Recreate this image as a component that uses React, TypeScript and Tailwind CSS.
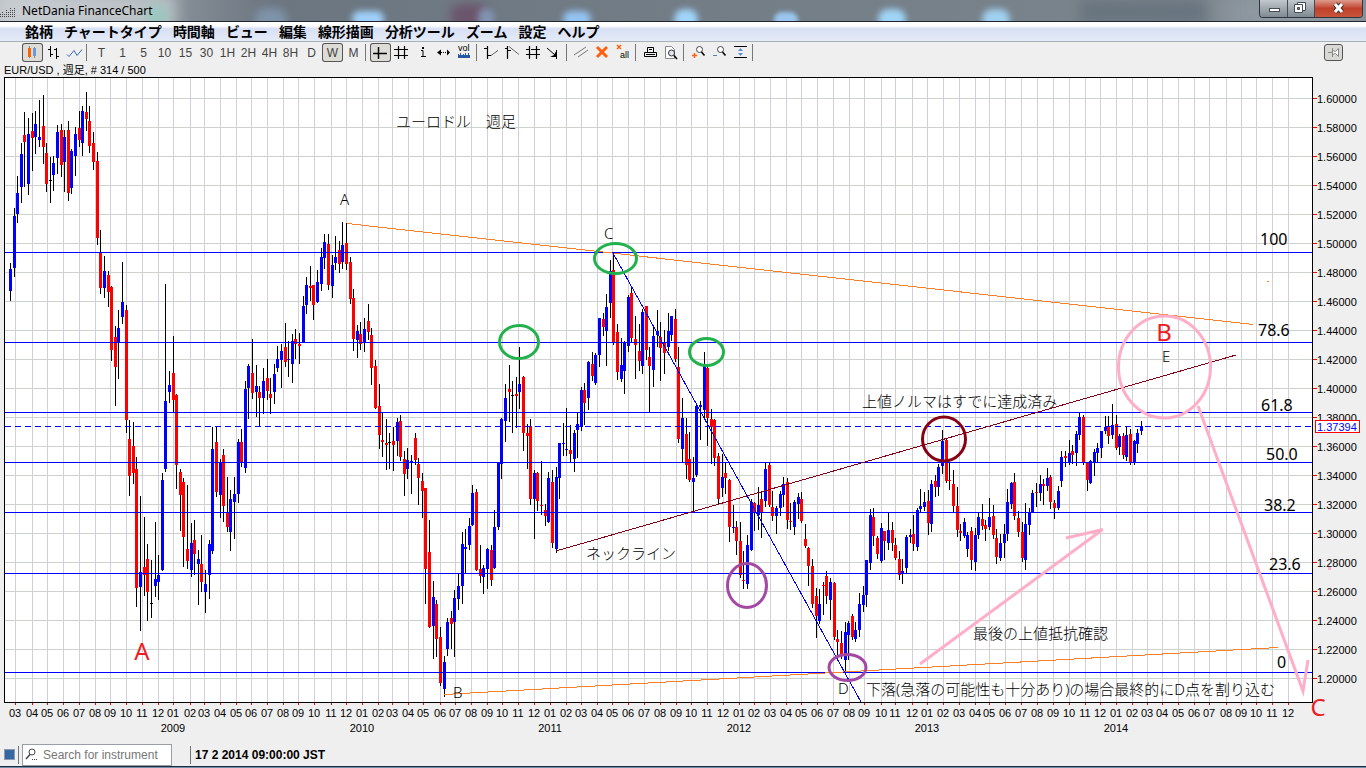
import type { ReactNode } from "react"

// x, high, low, body top, body bottom, kind (1 up, 0 down, 2 flat)
const CANDLES: number[][] = [
    [10,263,301,269,291,1],[14,208,277,216,268,1],[17,176,223,193,214,1],[21,143,203,154,187,1],[24,112,187,135,142,0],[28,118,195,134,184,1],
    [32,113,171,131,138,0],[35,111,154,124,137,1],[39,100,147,137,140,1],[43,95,164,126,147,0],[46,143,192,153,184,0],[50,157,203,180,181,2],
    [53,156,191,163,175,1],[57,125,174,132,158,1],[61,124,177,130,165,0],[64,130,192,137,162,1],[68,121,201,130,193,0],[71,149,194,151,188,1],
    [75,127,176,134,156,1],[79,111,147,128,140,0],[82,106,156,111,143,1],[86,92,131,112,119,0],[89,106,153,121,146,0],[93,132,170,143,162,0],
    [97,152,245,161,238,0],[100,230,294,253,288,0],[104,256,298,271,288,1],[108,271,307,275,292,0],[111,286,361,287,350,0],[115,326,406,337,367,0],
    [118,310,379,328,342,1],[122,262,324,302,317,1],[126,305,433,310,420,0],[129,420,496,439,476,0],[133,422,484,446,473,0],[136,457,607,469,588,0],
    [140,496,631,572,587,1],[144,517,596,567,575,0],[147,544,621,559,592,0],[151,560,618,603,604,2],[155,522,597,579,586,1],[158,555,600,575,582,1],
    [162,473,571,480,570,1],[165,284,472,401,469,1],[169,371,403,385,392,1],[173,336,412,373,400,0],[176,394,489,395,465,0],[180,469,531,472,495,0],
    [183,478,567,482,537,0],[187,485,569,549,561,0],[191,523,577,543,570,1],[194,520,575,540,554,0],[198,550,605,559,564,1],[201,535,592,564,582,0],
    [205,570,613,584,592,1],[209,540,599,544,575,1],[212,427,554,449,551,1],[216,427,497,442,492,0],[220,459,518,462,495,1],[223,449,522,455,506,0],
    [227,477,532,513,527,0],[230,490,551,499,532,1],[234,477,539,494,502,1],[238,439,503,442,494,1],[241,429,467,442,462,0],[245,381,473,389,468,1],
    [248,364,419,366,388,1],[252,339,399,373,393,0],[256,365,417,386,392,1],[259,386,426,392,398,0],[263,368,414,381,398,1],[267,359,400,378,391,0],
    [270,378,414,394,398,0],[274,364,404,374,392,1],[277,346,372,359,368,1],[281,344,388,351,360,1],[285,323,367,347,362,0],[288,341,377,359,360,1],
    [292,334,383,341,364,1],[295,329,359,339,344,0],[299,333,364,344,346,0],[303,296,342,306,342,1],[306,277,314,285,305,1],[310,266,301,286,288,0],
    [313,285,320,285,305,0],[317,270,303,282,302,1],[321,248,291,257,284,1],[324,234,269,242,258,1],[328,234,290,244,285,0],[332,255,298,265,286,1],
    [335,236,270,257,263,1],[339,241,273,250,264,0],[342,222,269,245,262,1],[346,223,270,243,264,0],[350,257,304,262,299,0],[353,289,351,298,339,0],
    [357,325,358,331,340,1],[360,322,350,334,344,0],[364,318,352,329,343,1],[368,304,340,321,332,0],[371,328,385,335,368,0],[375,360,409,366,408,0],
    [379,384,449,406,435,0],[382,413,457,440,442,0],[386,419,470,443,445,0],[389,433,469,442,443,2],[393,427,471,441,445,0],[397,418,456,422,441,1],
    [400,415,461,421,457,0],[404,451,496,459,474,0],[407,448,479,460,469,1],[411,455,494,461,462,1],[415,433,465,438,460,0],[418,458,505,464,478,0],
    [422,473,518,481,491,0],[425,488,604,488,569,0],[429,520,628,552,627,0],[433,581,659,597,626,1],[436,600,657,604,639,0],[440,627,686,637,683,0],
    [444,656,697,662,689,1],[447,618,656,622,649,1],[451,611,649,618,624,0],[454,590,657,598,622,1],[458,574,610,586,599,1],[462,532,604,544,586,1],
    [465,529,573,547,549,1],[469,518,550,526,545,1],[472,485,526,493,525,1],[476,489,571,492,570,0],[480,545,583,569,576,0],[483,565,594,568,577,1],
    [487,548,589,549,569,1],[491,545,586,550,580,0],[494,510,569,527,568,1],[498,462,530,462,527,1],[501,418,479,419,464,1],[505,384,442,398,421,1],
    [509,365,422,389,392,0],[512,381,433,395,396,2],[516,377,428,394,396,0],[519,347,409,384,392,1],[523,376,451,377,433,0],[527,424,469,433,436,0],
    [530,419,505,426,499,0],[534,470,539,473,499,1],[537,472,511,473,501,0],[541,461,515,505,506,0],[545,504,526,510,516,0],[548,472,523,478,522,1],
    [552,470,548,482,543,0],[556,467,553,477,549,1],[559,443,499,443,478,1],[563,423,456,443,444,1],[566,408,456,449,450,1],[570,425,462,450,454,0],
    [574,430,472,433,459,1],[577,413,458,424,430,1],[581,387,431,390,427,1],[584,383,425,390,403,0],[588,361,410,362,398,1],[592,352,381,364,376,0],
    [595,353,385,355,383,1],[599,318,367,318,355,1],[603,313,336,319,327,0],[606,294,366,307,331,1],[610,260,318,271,303,1],[613,253,345,270,343,0],
    [617,324,380,332,372,0],[621,338,382,365,379,1],[624,341,394,342,371,1],[628,295,352,297,346,1],[631,287,342,293,338,0],[635,316,379,339,345,0],
    [639,324,371,351,361,0],[642,309,374,312,366,1],[646,306,360,306,350,0],[649,347,412,357,366,0],[653,326,387,336,370,1],[657,310,347,331,335,1],
    [660,322,381,337,348,0],[664,330,374,343,353,0],[668,313,351,331,347,1],[671,316,341,316,335,1],[675,309,362,319,359,0],[678,347,443,367,439,0],
    [682,398,463,418,449,1],[686,418,479,434,465,0],[689,432,482,459,480,0],[693,457,513,478,482,1],[696,404,477,406,475,1],[700,401,440,405,407,1],
    [704,352,418,365,410,1],[707,365,446,368,418,0],[711,409,464,419,427,0],[714,419,466,420,458,0],[718,453,504,456,499,0],[722,454,497,477,488,1],
    [725,462,494,473,478,0],[729,479,542,480,527,0],[733,505,533,527,528,1],[736,521,555,527,541,0],[740,522,578,541,575,0],[743,551,589,580,581,0],
    [747,535,589,545,584,1],[751,499,551,502,550,1],[754,502,531,503,512,0],[758,487,530,505,515,1],[761,492,538,499,512,0],[765,463,507,469,501,1],
    [769,463,507,465,505,0],[772,491,521,507,516,0],[776,506,534,508,516,1],[780,491,516,494,508,1],[783,477,507,484,495,1],[787,478,529,482,520,0],
    [790,503,530,521,522,0],[794,500,535,502,527,1],[798,493,519,497,504,1],[801,492,523,499,521,0],[805,524,548,539,546,0],[808,547,586,548,566,0],
    [812,559,608,566,604,0],[816,588,638,596,616,0],[819,589,624,604,621,1],[823,582,615,585,586,0],[826,571,604,576,596,0],[830,578,620,582,600,1],
    [834,582,640,583,637,0],[837,630,655,639,642,0],[841,631,659,643,655,0],[845,622,672,632,660,1],[848,621,660,623,635,1],[852,614,640,616,637,0],
    [855,622,642,630,639,1],[859,593,637,604,630,1],[863,586,612,595,605,1],[866,560,607,560,595,1],[870,509,570,515,563,1],[873,508,546,517,536,0],
    [877,536,559,538,554,0],[881,523,563,528,561,1],[884,531,560,531,541,0],[888,513,550,530,543,1],[892,522,551,530,543,0],[895,538,560,545,558,0],
    [899,551,580,559,575,0],[902,559,584,571,574,1],[906,535,574,537,568,1],[910,529,543,535,537,1],[913,515,551,534,544,0],[917,508,551,510,547,1],
    [920,489,512,506,509,1],[924,492,511,502,507,1],[928,490,535,501,523,0],[931,480,532,484,524,1],[935,475,497,481,487,0],[938,464,496,467,487,1],
    [942,430,474,441,466,1],[946,438,483,440,481,0],[949,462,490,480,481,0],[953,470,512,484,506,0],[957,487,537,506,530,0],[960,524,541,531,533,0],
    [964,518,538,522,536,1],[967,532,557,535,549,1],[971,527,570,531,560,0],[975,528,571,535,562,1],[978,513,539,517,535,1],[982,504,530,519,526,0],
    [985,520,541,525,529,0],[989,498,530,517,527,1],[993,505,539,516,535,0],[996,529,564,538,557,0],[1000,534,561,543,558,1],[1004,524,558,534,543,1],
    [1007,489,541,502,534,1],[1011,482,509,483,504,1],[1014,473,520,482,516,0],[1018,511,537,518,532,0],[1022,522,562,532,558,0],[1025,503,570,524,560,1],
    [1029,508,535,512,525,1],[1032,490,513,493,512,1],[1036,483,507,492,493,0],[1040,475,501,484,493,1],[1043,479,505,484,486,0],[1047,468,491,478,486,1],
    [1050,475,509,477,502,0],[1054,500,519,503,508,0],[1058,486,510,491,508,1],[1061,451,487,457,481,1],[1065,451,467,456,458,0],[1069,440,465,453,463,1],
    [1072,445,464,451,455,0],[1076,431,466,434,453,1],[1079,413,440,417,435,1],[1083,415,465,417,463,0],[1087,463,491,463,480,0],[1090,460,484,461,483,1],
    [1094,449,476,452,463,1],[1097,443,462,448,453,1],[1101,431,458,431,448,1],[1105,416,434,427,431,1],[1108,416,444,426,436,0],[1112,404,439,425,435,1],
    [1116,415,450,424,448,0],[1119,434,455,436,447,1],[1123,433,459,436,455,0],[1126,426,461,435,457,1],[1130,429,465,434,463,0],[1134,440,465,441,463,1],
    [1137,429,453,433,444,1],[1141,421,435,426,431,1],
]

const COLORS = ["#ff0000", "#0000ff", "#000000"]

// first month is march 2008
const MONTHS = [
    15, 32, 47, 63, 79, 95, 110, 126, 142, 158,
    173, 190, 204, 220, 236, 251, 267, 283, 298, 314, 331, 346,
    362, 378, 392, 408, 423, 440, 455, 471, 487, 502, 518, 534,
    550, 566, 581, 597, 612, 628, 644, 660, 676, 691, 707, 723,
    739, 754, 770, 786, 801, 817, 833, 849, 864, 881, 895, 912,
    927, 943, 959, 975, 989, 1005, 1021, 1037, 1053, 1069, 1085, 1100,
    1116, 1132, 1147, 1162, 1178, 1194, 1209, 1226, 1241, 1256, 1272, 1288,
]

const PRICES = Array.from({ length: 21 }, (_, i) => ({
    label: (1.6 - i * 0.02).toFixed(5),
    y: 98 + i * 29,
}))

const FIBS = [
    { label: "100", x: 1260, ty: 245, y: 252 },
    { label: "78.6", x: 1258, ty: 336, y: 342 },
    { label: "61.8", x: 1261, ty: 411, y: 412 },
    { label: "50.0", x: 1266, ty: 460, y: 462 },
    { label: "38.2", x: 1264, ty: 511, y: 512 },
    { label: "23.6", x: 1269, ty: 570, y: 573 },
    { label: "0", x: 1277, ty: 668, y: 672 },
]

const NOTES = [
    { text: "ユーロドル　週足", x: 396, y: 127 },
    { text: "上値ノルマはすでに達成済み", x: 862, y: 407 },
    { text: "ネックライン", x: 586, y: 559 },
    { text: "最後の上値抵抗確認", x: 973, y: 639 },
    { text: "下落(急落の可能性も十分あり)の場合最終的にD点を割り込む", x: 866, y: 695 },
    { text: "A", x: 340, y: 205 },
    { text: "B", x: 453, y: 698 },
    { text: "C", x: 604, y: 239 },
    { text: "D", x: 838, y: 694 },
    { text: "E", x: 1162, y: 362 },
]

const MENUS = ["銘柄", "チャートタイプ", "時間軸", "ビュー", "編集", "線形描画", "分析ツール", "ズーム", "設定", "ヘルプ"]
const PERIODS = ["T", "1", "5", "10", "15", "30", "1H", "2H", "4H", "8H", "D", "W", "M"]

const Icon = ({ children }: { children: ReactNode }) => (
    <svg viewBox="0 0 21 19" className="h-[19px] w-[21px]" fill="none" stroke="#000">
        {children}
    </svg>
)

const Tool = ({ label, active, children }: { label: string; active?: boolean; children: ReactNode }) => (
    <button
        type="button"
        aria-label={label}
        className={
            active
                ? "relative flex h-[19px] w-[21px] items-center justify-center rounded-[3px] bg-[#dedcd6] text-xs text-[#444] ring-1 ring-inset ring-[#555]"
                : "flex h-[19px] w-[21px] items-center justify-center text-xs text-[#444]"
        }
    >
        {children}
    </button>
)

const Sep = () => <span className="mr-[4px] ml-px h-[17px] w-px bg-[#777]" />

const TitleBar = () => (
    <header className="relative flex h-[22px] items-start justify-between overflow-hidden border-b border-[#20242c] bg-linear-to-r from-[#b9bec4] via-[#6c7680] via-20% to-[#7e8890]">
        <div className="absolute inset-0">
            <span className="absolute -top-2 left-0 h-10 w-44 bg-[#d0d6d8]/70 blur-sm" />
            <span className="absolute top-1 left-[145px] h-6 w-6 rounded-full bg-[#8fc9bd]/70 blur-[5px]" />
            <span className="absolute top-2 left-[255px] h-6 w-8 rounded-full bg-[#8aa6c4]/60 blur-[4px]" />
            <span className="absolute top-[11px] left-[352px] h-4 w-8 rounded-full bg-[#9fd0fb] blur-[3px]" />
            <span className="absolute top-1 left-[450px] h-6 w-10 rounded-full bg-[#6a4c66]/80 blur-[5px]" />
            <span className="absolute top-2 left-[478px] h-6 w-4 rounded-full bg-[#8aa8cc]/70 blur-[3px]" />
            <span className="absolute top-[11px] left-[563px] h-4 w-7 rounded-full bg-[#94c4f2] blur-[3px]" />
            <span className="absolute top-[9px] left-[674px] h-5 w-6 rounded-full bg-[#a0d4fb] blur-[3px]" />
            <span className="absolute top-[12px] left-[774px] h-4 w-6 rounded-full bg-[#9ac6ee] blur-[2px]" />
            <span className="absolute top-[9px] left-[878px] h-5 w-7 rounded-full bg-[#a0d4f6] blur-[3px]" />
            <span className="absolute top-[9px] left-[982px] h-5 w-7 rounded-full bg-[#a0d0f0] blur-[3px]" />
            <span className="absolute top-0 left-[1080px] h-6 w-32 bg-[#5e6a76]/60 blur-[6px]" />
            <span className="absolute -top-2 right-0 h-10 w-36 bg-[#aab4bc]/50 blur-lg" />
        </div>
        <h1 className="relative flex items-center text-xs leading-[21px] text-black">
            <svg viewBox="0 0 22 21" className="h-[21px] w-[22px]" stroke="#444" strokeDasharray="1 1">
                <path d="M.5 17v-4M2.5 17v-5M4.5 17v-4M6.5 17v-7M8.5 17v-5M10.5 17V8M12.5 17v-7M14.5 17V8" />
            </svg>
            NetDania FinanceChart
        </h1>
        <div className="relative mr-[3px] flex h-[18px] overflow-hidden rounded-b-[4px] border border-t-0 border-[#30363e]">
            <button type="button" aria-label="Minimize" className="w-7 border-r border-[#444c54] bg-linear-to-b from-[#c2c8cc] to-[#7f8a92]">
                <svg viewBox="0 0 28 17" className="h-[17px] w-7">
                    <rect x="9.5" y="8.5" width="10" height="3" fill="#fff" stroke="#444c58" />
                </svg>
            </button>
            <button type="button" aria-label="Restore" className="w-[27px] border-r border-[#444c54] bg-linear-to-b from-[#c2c8cc] to-[#7f8a92]">
                <svg viewBox="0 0 26 17" className="h-[17px] w-[26px]" fill="#fff" stroke="#444c58">
                    <path d="M9.500 2.500h8v8h-8z" />
                    <path d="M6.500 4.500h8v8h-8z" />
                    <path d="M9.500 7.500h2v2h-2z" fill="#777" />
                </svg>
            </button>
            <button type="button" aria-label="Close" className="w-[47px] bg-linear-to-b from-[#dd9a8c] via-[#c0402a] to-[#c8553a]">
                <svg viewBox="0 0 47 17" className="h-[17px] w-[47px]">
                    <path d="M20 4l7 8M27 4l-7 8" stroke="#4a3030" strokeWidth="5" />
                    <path d="M20 4l7 8M27 4l-7 8" stroke="#fff" strokeWidth="3" />
                </svg>
            </button>
        </div>
    </header>
)

const Toolbar = () => (
    <div className="flex h-[21px] items-center justify-between pr-[23px] pl-[22px]">
        <div className="flex items-center">
            <Tool label="Candlestick" active>
                <Icon>
                    <path d="M7.500 3v12M12.500 4v11" stroke="#888" />
                    <path d="M6 5h3v9H6z" fill="#ff6000" stroke="none" />
                    <path d="M11 5h3v8h-3z" fill="#6a9ad8" stroke="none" />
                </Icon>
            </Tool>
            <Tool label="Bars">
                <Icon>
                    <path d="M7.500 3v11M5 6.500h2M8 11.500h2M13.500 5v11M11 6.500h2M14 13.500h2" />
                </Icon>
            </Tool>
            <Tool label="Line">
                <Icon>
                    <path d="M3 11.500l2 2 5-6 3 5 5-6" stroke="#3c6cb4" />
                </Icon>
            </Tool>
            <Sep />
            {PERIODS.map((p) => (
                <Tool key={p} label={p} active={p === "W"}>
                    {p}
                </Tool>
            ))}
            <Sep />
            <Tool label="Crosshair" active>
                <Icon>
                    <path d="M8.500 4v12M3 10.500h14" strokeWidth="1.500" />
                </Icon>
            </Tool>
            <Tool label="Grid">
                <Icon>
                    <path d="M7.500 3v13M13.500 3v13M3 6.500h14M3 12.500h14" strokeWidth="1.200" />
                </Icon>
            </Tool>
            <Tool label="Info">
                <Icon>
                    <path d="M9 7.500h2V13M9 13.500h5" />
                    <path d="M10 4h2v2h-2z" fill="#000" stroke="none" />
                </Icon>
            </Tool>
            <Tool label="Scroll">
                <Icon>
                    <path d="M4 9.500l4-3v6zM17 9.500l-3-3v6z" fill="#000" stroke="none" />
                    <path d="M8 9.500h1M10 9.500h1M12 9.500h1" />
                </Icon>
            </Tool>
            <Tool label="Volume">
                <Icon>
                    <text x="4" y="8" fontSize="9" fill="#000" stroke="none">vol</text>
                    <path d="M4 15v-4h1v1h1v-2h1v2h2v-1h1v1h1v-2h1v2h2v-2h1v2h1v3z" fill="#2c55a8" stroke="none" />
                </Icon>
            </Tool>
            <Sep />
            <Tool label="Trend line">
                <Icon>
                    <path d="M6.500 3v13M3 5.500h3M7 12.500h3" strokeWidth="1.200" />
                    <path d="M10 12.500l7-5" stroke="#666" />
                </Icon>
            </Tool>
            <Tool label="Ray">
                <Icon>
                    <path d="M5.500 3v13M3 5.500h3M6 7.500h3" strokeWidth="1.200" />
                    <path d="M7 3.500l10 8" stroke="#666" />
                </Icon>
            </Tool>
            <Tool label="Channel">
                <Icon>
                    <path d="M6.500 3v13M13.500 3v13M3 6.500h3M8 6.500h9M3 11.500h14" strokeWidth="1.200" />
                </Icon>
            </Tool>
            <Tool label="Arrow">
                <Icon>
                    <path d="M3 5l8 7M12.500 7v9" />
                    <path d="M13 7v7H6l4-2 1-2z" fill="#000" stroke="none" />
                </Icon>
            </Tool>
            <Sep />
            <Tool label="Parallel lines">
                <Icon>
                    <path d="M3 12L15 4M7 14l10-7" stroke="#777" />
                </Icon>
            </Tool>
            <Tool label="Delete">
                <Icon>
                    <path d="M5 4l10 10M15 4L5 14" stroke="#ff6010" strokeWidth="3" />
                </Icon>
            </Tool>
            <Tool label="Delete all">
                <Icon>
                    <path d="M4 2l4 4M8 2L4 6" stroke="#ff6010" strokeWidth="1.500" />
                    <text x="7" y="15" fontSize="9" fill="#000" stroke="none">all</text>
                </Icon>
            </Tool>
            <Sep />
            <Tool label="Print">
                <Icon>
                    <path d="M7.500 9V4.500h6V9M4.500 13.500v-4h12v4zM6 11.500h9M9 6.500h3" />
                </Icon>
            </Tool>
            <Tool label="Preview">
                <Icon>
                    <path d="M4.500 3.500h6l3 3v9h-9z" fill="#fff" stroke="#888" />
                    <circle cx="10.500" cy="10" r="3" fill="#dfe7f0" stroke="#333" />
                    <path d="M13 12.500l3 3.500" strokeWidth="1.500" />
                </Icon>
            </Tool>
            <Sep />
            <Tool label="Zoom in">
                <Icon>
                    <circle cx="11.500" cy="6.500" r="3" fill="#fff" stroke="#444" />
                    <path d="M13.500 9l3 3.500" strokeWidth="1.500" />
                    <path d="M4 12.500h5M6.500 10v5" stroke="#ff6010" strokeWidth="1.500" />
                </Icon>
            </Tool>
            <Tool label="Zoom out">
                <Icon>
                    <circle cx="11.500" cy="6.500" r="3" fill="#fff" stroke="#444" />
                    <path d="M13.500 9l3 3.500" strokeWidth="1.500" />
                    <path d="M4 12.500h4" stroke="#5080c0" />
                </Icon>
            </Tool>
            <Tool label="Fit">
                <Icon>
                    <path d="M4 3.500h13M4 14.500h13" />
                    <path d="M10.500 5l2.500 3H8zM10.500 13L8 10h5z" fill="#5a90d0" stroke="none" />
                </Icon>
            </Tool>
            <Sep />
        </div>
        <button type="button" aria-label="Pin" className="h-[17px] w-[19px] rounded-[3px] border border-[#555] bg-[#d8d8d4]">
            <svg viewBox="0 0 17 15" className="h-[15px] w-[17px]" fill="#fff" stroke="#888">
                <path d="M3 7.500h4M7.500 3v9M7.500 5.500l3 1 3-3v8l-3-3-3 1" />
            </svg>
        </button>
    </div>
)

const Chart = () => (
    <svg viewBox="0 77 1366 663" className="block w-full" role="img" aria-label="EUR/USD">
        <rect x="4.500" y="77.500" width="1308" height="625" fill="#fff" />

        <g stroke="#d4ced6" shapeRendering="crispEdges">
            {PRICES.map((p) => (
                <line key={p.y} x1="5" x2="1312" y1={p.y + 0.5} y2={p.y + 0.5} stroke="#ccd2cc" />
            ))}
            {MONTHS.map((x) => (
                <line key={x} x1={x + 0.5} x2={x + 0.5} y1="78" y2="702" />
            ))}
        </g>

        <g stroke="#ff0000" shapeRendering="crispEdges">
            {PRICES.map((p) => (
                <line key={p.y} x1="1313" x2="1317" y1={p.y + 0.5} y2={p.y + 0.5} />
            ))}
            {MONTHS.map((x) => (
                <line key={x} x1={x + 0.5} x2={x + 0.5} y1="703" y2="705" />
            ))}
        </g>

        <g shapeRendering="crispEdges">
            {CANDLES.map(([x, high, low, top, bottom, kind]) => (
                <g key={x}>
                    <rect x={x} y={high} width="1" height={low - high} fill="#000" />
                    <rect x={x - 1} y={top} width="3" height={bottom - top} fill={COLORS[kind]} />
                </g>
            ))}
        </g>

        <g stroke="#0000ff" shapeRendering="crispEdges">
            {FIBS.map((f) => (
                <line key={f.y} x1="5" x2="1312" y1={f.y + 0.5} y2={f.y + 0.5} />
            ))}
            <line x1="5" x2="1312" y1="426.500" y2="426.500" strokeDasharray="6 4" />
        </g>

        <rect x="4.500" y="77.500" width="1308" height="625" fill="none" stroke="#000" />

        {/* trend lines */}
        <g shapeRendering="crispEdges">
            <path d="M347 223.500L1253 324.500M444 694.500L1278 647.500" stroke="#ff7f27" />
            <path d="M556 551L1236 355" stroke="#880015" />
            <path d="M613 253L861 702" stroke="#0000ff" />
        </g>

        <g fill="none" strokeWidth="3">
            <g stroke="#22b14c">
                <ellipse cx="519" cy="342" rx="19.500" ry="16.500" />
                <ellipse cx="615.500" cy="258.500" rx="21" ry="15" />
                <ellipse cx="706.500" cy="352" rx="17" ry="13.500" />
            </g>
            <g stroke="#a349a4">
                <ellipse cx="747" cy="585.500" rx="19.500" ry="22" />
                <ellipse cx="847.500" cy="667.500" rx="18.500" ry="13" />
            </g>
            <ellipse cx="944" cy="439" rx="21.500" ry="22" stroke="#880015" />
            <g stroke="#ffaec9">
                <ellipse cx="1164.500" cy="367" rx="46" ry="51" />
                <path d="M920 664L1102 530M1066 538L1103 529.500M1198 406L1303 691L1308 660" />
            </g>
        </g>
        <rect x="1328" y="567" width="3" height="3" fill="#ffaec9" />
        <rect x="1267" y="281" width="2" height="1" fill="#ff7f27" />

        <g className="font-['Noto_Sans','Noto_Sans_CJK_JP',sans-serif]">
            <g className="text-base">
                {FIBS.map((f) => (
                    <text key={f.label} x={f.x} y={f.ty}>{f.label}</text>
                ))}
            </g>
            <g className="text-[15px] font-light">
                {NOTES.map((n) => (
                    <text key={n.text} x={n.x} y={n.y}>{n.text}</text>
                ))}
            </g>
        </g>
        <g className="font-['Noto_Sans',sans-serif] text-2xl" fill="#ed1c24" textAnchor="middle">
            <text x="142" y="660">A</text>
            <text x="1164" y="341">B</text>
            <text x="1318" y="716">C</text>
        </g>

        <g className="text-[11px]">
            {PRICES.map((p) => (
                <text key={p.y} x="1317" y={p.y + 5}>{p.label}</text>
            ))}
            <rect x="1315.500" y="420.500" width="44" height="12" fill="#fff" stroke="#ff0000" />
            <text x="1317" y="431" fill="#0000ff">1.37394</text>
            <g textAnchor="middle">
                {MONTHS.map((x, i) => (
                    <text key={x} x={x} y="717">{String(((i + 2) % 12) + 1).padStart(2, "0")}</text>
                ))}
                {[2009, 2010, 2011, 2012, 2013, 2014].map((year, i) => (
                    <text key={year} x={MONTHS[10 + i * 12]} y="732">{year}</text>
                ))}
            </g>
        </g>
    </svg>
)

const Footer = () => (
    <footer>
        <div className="flex h-[26px] items-center pl-1 text-xs">
            <span className="mt-[3px] h-[11px] w-[11px] border border-[#8a9ab0] bg-[#3568a0]" />
            <span className="mt-[3px] ml-[3px] h-[18px] w-px bg-[#777]" />
            <label className="mt-[3px] ml-[3px] flex h-[22px] w-[150px] items-center border border-[#999fa8] bg-white">
                <svg viewBox="0 0 20 20" className="h-5 w-5 shrink-0" fill="none" stroke="#444">
                    <circle cx="9" cy="7" r="3" />
                    <path d="M7 9.500L3 14" strokeWidth="1.500" />
                    <path d="M9 14.500h1M11 14.500h1M13 14.500h1" />
                </svg>
                <input
                    type="text"
                    aria-label="Search for instrument"
                    placeholder="Search for instrument"
                    className="w-full min-w-0 bg-transparent outline-none placeholder:text-[#777]"
                />
            </label>
            <span className="mt-[3px] ml-[18px] h-[18px] w-px bg-[#777]" />
            <time className="mt-[3px] ml-1 font-bold">17 2 2014 09:00:00 JST</time>
        </div>
        <div className="h-[2px] border-t border-[#1c2c40] bg-[#6f8ea8]" />
    </footer>
)

const App = () => {
    return (
        <div className="bg-[#efefef] font-['Liberation_Sans','Noto_Sans_CJK_JP',sans-serif] text-black">
            <div className="font-['Noto_Sans',sans-serif]">
                <TitleBar />
            </div>
            <nav className="flex h-5 items-center gap-[11px] border-b border-[#a8b0b8] bg-linear-to-b from-white from-20% via-[#d8e0f4] via-35% to-[#e4eaf6] pl-[25px] font-['Noto_Sans_CJK_JP',sans-serif] text-sm leading-[19px] font-bold whitespace-nowrap">
                {MENUS.map((m) => (
                    <button key={m} type="button">{m}</button>
                ))}
            </nav>
            <Toolbar />
            <p className="h-[14px] pl-1 text-[11px] leading-[14px]">EUR/USD , 週足, # 314 / 500</p>
            <Chart />
            <Footer />
        </div>
    )
}

export default App
